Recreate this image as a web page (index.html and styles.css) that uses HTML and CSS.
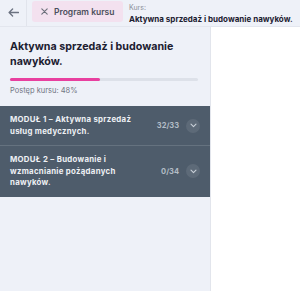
FILE: index.html
```html
<!DOCTYPE html>
<html lang="pl">
<head>
<meta charset="utf-8">
<link rel="stylesheet" href="styles.css">
</head>
<body>
<header class="topbar">
  <div class="back">
    <svg width="11" height="9" viewBox="0 0 11 9"><path d="M10.5 4.5H1.2M4.6 1 1.1 4.5 4.6 8" fill="none" stroke="#6b7280" stroke-width="1.3" stroke-linecap="round" stroke-linejoin="round"/></svg>
  </div>
  <div class="pill">
    <svg width="7" height="7" viewBox="0 0 7 7"><path d="M0.8 0.8 6.2 6.2M6.2 0.8 0.8 6.2" stroke="#6b6f7a" stroke-width="1.1" stroke-linecap="round"/></svg>
    <span>Program kursu</span>
  </div>
  <div class="course">
    <div class="label">Kurs:</div>
    <div class="name">Aktywna sprzedaż i budowanie nawyków.</div>
  </div>
</header>
<div class="main">
  <aside class="sidebar">
    <div class="intro">
      <h1>Aktywna sprzedaż i budowanie nawyków.</h1>
      <div class="track"><div class="fill" style="width:48%"></div></div>
      <div class="progress">Postęp kursu: 48%</div>
    </div>
    <div class="module">
      <div class="mtitle">MODUŁ 1 – Aktywna sprzedaż usług medycznych.</div>
      <div class="count">32/33</div>
      <div class="chev"><svg width="7" height="5" viewBox="0 0 7 5"><path d="M1 1.2 3.5 3.7 6 1.2" fill="none" stroke="#c9d0d8" stroke-width="1.1" stroke-linecap="round" stroke-linejoin="round"/></svg></div>
    </div>
    <div class="module">
      <div class="mtitle">MODUŁ 2 – Budowanie i wzmacnianie pożądanych nawyków.</div>
      <div class="count">0/34</div>
      <div class="chev"><svg width="7" height="5" viewBox="0 0 7 5"><path d="M1 1.2 3.5 3.7 6 1.2" fill="none" stroke="#c9d0d8" stroke-width="1.1" stroke-linecap="round" stroke-linejoin="round"/></svg></div>
    </div>
  </aside>
  <section class="content"></section>
</div>
</body>
</html>
```
FILE: styles.css
```css
* { box-sizing: border-box; margin: 0; padding: 0; }
html, body { height: 100%; }
body {
  font-family: "Inter", "Open Sans", sans-serif;
  background: #ffffff;
  color: #1f2330;
  display: flex;
  flex-direction: column;
}
.topbar {
  height: 27px;
  background: #eef1f8;
  border-bottom: 1px solid #e3e6ee;
  display: flex;
  align-items: flex-start;
  flex-shrink: 0;
}
.back {
  width: 27px;
  height: 26px;
  border-right: 1px solid #e1e4ec;
  display: flex;
  align-items: center;
  justify-content: center;
  padding-bottom: 2px;
}
.pill {
  margin: 1px 0 0 5px;
  height: 21px;
  width: 91px;
  background: #f3e1ef;
  border-radius: 3px;
  display: flex;
  align-items: center;
  gap: 6px;
  padding-left: 9px;
  font-size: 8.5px;
  font-weight: 600;
  color: #4b4f5c;
  white-space: nowrap;
}
.course { margin-left: 6px; padding-top: 3px; }
.label { font-size: 7px; color: #8b8f99; line-height: 9px; }
.name { font-size: 8px; font-weight: 700; color: #1c2030; line-height: 12px; margin-top: 1px; white-space: nowrap; }
.main { flex: 1; display: flex; }
.sidebar {
  width: 211px;
  background: #eef1f8;
  border-right: 1px solid #e2e5ec;
}
.intro { padding: 12px 12px 10px 10px; }
h1 {
  font-size: 10.7px;
  font-weight: 700;
  line-height: 15px;
  color: #1c2030;
}
.track {
  margin-top: 9px;
  height: 3px;
  background: #dde1e9;
  border-radius: 2px;
}
.fill { height: 100%; background: #e8409f; border-radius: 2px; }
.progress {
  margin-top: 5px;
  font-size: 7.5px;
  color: #727684;
  line-height: 10px;
}
.module {
  background: #4e5c6b;
  display: flex;
  align-items: center;
  padding: 8px 10px 8px 10px;
  border-bottom: 1px solid #65727f;
}
.module:last-child { border-bottom: none; }
.mtitle {
  flex: 1;
  font-size: 7.8px;
  font-weight: 700;
  line-height: 11.5px;
  letter-spacing: 0.3px;
  color: #eef1f5;
  padding-right: 22px;
}
.count { font-size: 7.5px; font-weight: 700; color: #b3bcc6; margin-right: 7px; }
.chev {
  width: 14px;
  height: 14px;
  border-radius: 50%;
  background: #5d6a78;
  display: flex;
  align-items: center;
  justify-content: center;
}
.content { flex: 1; background: #ffffff; }
```
